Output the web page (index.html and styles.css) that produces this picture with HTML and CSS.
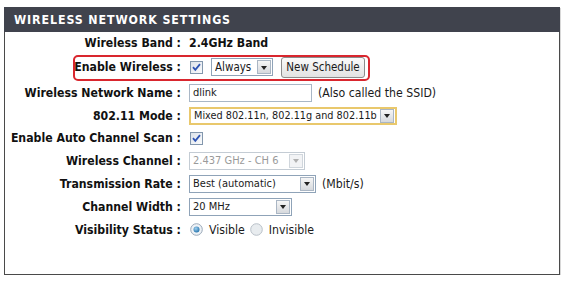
FILE: index.html
```html
<!DOCTYPE html>
<html>
<head>
<meta charset="utf-8">
<link rel="stylesheet" href="styles.css">
</head>
<body>
<div class="panel">
  <div class="head">WIRELESS NETWORK SETTINGS</div>
  <div class="form">
    <div class="row h21"><span class="lbl">Wireless Band :</span><span class="val bold">2.4GHz Band</span></div>
    <div class="row h28 hl">
      <span class="mark"></span>
      <span class="lbl">Enable Wireless :</span>
      <span class="val">
        <span class="chk"><svg viewBox="0 0 13 13" width="13" height="13"><path d="M3 6.2 L5.3 8.8 L10 3.2" fill="none" stroke="#2e54b4" stroke-width="1.8"/></svg></span>
        <span class="sel w-always"><span class="txt">Always</span><span class="arr"></span></span>
        <span class="btn">New Schedule</span>
      </span>
    </div>
    <div class="row h23"><span class="lbl">Wireless Network Name :</span><span class="val"><span class="inp">dlink</span><span class="note">(Also called the SSID)</span></span></div>
    <div class="row h23"><span class="lbl">802.11 Mode :</span><span class="val"><span class="sel w-mode focus"><span class="txt">Mixed 802.11n, 802.11g and 802.11b</span><span class="arr"></span></span></span></div>
    <div class="row h22"><span class="lbl">Enable Auto Channel Scan :</span><span class="val"><span class="chk"><svg viewBox="0 0 13 13" width="13" height="13"><path d="M3 6.2 L5.3 8.8 L10 3.2" fill="none" stroke="#2e54b4" stroke-width="1.8"/></svg></span></span></div>
    <div class="row h23"><span class="lbl">Wireless Channel :</span><span class="val"><span class="sel w-chan dis"><span class="txt">2.437 GHz - CH 6</span><span class="arr"></span></span></span></div>
    <div class="row h23"><span class="lbl">Transmission Rate :</span><span class="val"><span class="sel w-rate"><span class="txt">Best (automatic)</span><span class="arr"></span></span><span class="note">(Mbit/s)</span></span></div>
    <div class="row h23"><span class="lbl">Channel Width :</span><span class="val"><span class="sel w-width"><span class="txt">20 MHz</span><span class="arr"></span></span></span></div>
    <div class="row h23"><span class="lbl">Visibility Status :</span><span class="val">
      <span class="radio"><svg viewBox="0 0 13 13" width="13" height="13"><defs><radialGradient id="rg" cx="0.4" cy="0.35" r="0.7"><stop offset="0" stop-color="#9fd0f0"/><stop offset="1" stop-color="#1f6fa8"/></radialGradient></defs><circle cx="6.5" cy="6.5" r="5.8" fill="#eef2f6" stroke="#9aa8b8"/><circle cx="6.5" cy="6.5" r="3" fill="url(#rg)"/></svg></span>
      <span class="rtxt">Visible</span>
      <span class="radio"><svg viewBox="0 0 13 13" width="13" height="13"><circle cx="6.5" cy="6.5" r="5.8" fill="#e8ecef" stroke="#b8c0c8"/></svg></span>
      <span class="rtxt">Invisible</span>
    </span></div>
  </div>
</div>
</body>
</html>
```
FILE: styles.css
```css
html, body {
  margin: 0;
  padding: 0;
  background: #fff;
}
body {
  font-family: "DejaVu Sans", Verdana, sans-serif;
  font-stretch: condensed;
  color: #1a1a1a;
}
.panel {
  margin: 7px 0 0 4px;
  width: 556px;
  height: 268px;
  box-sizing: border-box;
  border: 1px solid #4a4a4a;
  border-top: none;
  box-shadow: 1px 1px 0 #d8d8d8;
  display: flex;
  flex-direction: column;
}
.head {
  height: 25px;
  background: #40434d;
  color: #fff;
  font-weight: bold;
  font-size: 12.3px;
  letter-spacing: 0.9px;
  padding-left: 10px;
  display: flex;
  align-items: center;
  margin: 0 -1px;
}
.form {
  display: flex;
  flex-direction: column;
}
.row {
  display: grid;
  grid-template-columns: 176px 1fr;
  column-gap: 8px;
  align-items: center;
  position: relative;
}
.h21 { height: 21px; }
.h22 { height: 22px; }
.h23 { height: 23px; }
.h28 { height: 28px; }
.lbl {
  text-align: right;
  font-weight: bold;
  font-size: 12.2px;
  white-space: nowrap;
  color: #111;
}
.val {
  display: flex;
  align-items: center;
  font-size: 11.5px;
  white-space: nowrap;
}
.bold { font-weight: bold; font-size: 12.2px; color: #111; }
.mark {
  position: absolute;
  left: 68px;
  top: 2px;
  width: 297px;
  height: 26px;
  box-sizing: border-box;
  border: 2.5px solid #d9262e;
  border-radius: 5px;
}
.chk {
  width: 13px;
  height: 13px;
  box-sizing: border-box;
  border: 1px solid #8397ad;
  background: linear-gradient(135deg, #dde3ea, #fafbfc);
  display: inline-flex;
  margin-left: 1px;
}
.chk svg { margin: -1px; }
.sel {
  display: inline-flex;
  align-items: center;
  height: 18px;
  box-sizing: border-box;
  border: 1px solid #8fa3b8;
  background: #fff;
  padding-left: 3px;
  font-size: 11px;
}
.sel .txt { flex: 1; overflow: hidden; }
.sel .arr {
  flex: none;
  width: 14px;
  height: 14px;
  box-sizing: border-box;
  margin-right: 1px;
  border: 1px solid #aab6c4;
  background: linear-gradient(#f6f6f6, #d6d9dd);
  display: flex;
  align-items: center;
  justify-content: center;
}
.sel .arr::after {
  content: "";
  border-left: 3.5px solid transparent;
  border-right: 3.5px solid transparent;
  border-top: 4px solid #222;
  margin-top: 1px;
}
.w-always { width: 62px; margin-left: 8px; font-size: 11.5px; }
.w-mode { width: 208px; font-size: 10.8px; }
.w-chan { width: 116px; }
.w-rate { width: 127px; }
.w-width { width: 103px; }
.focus {
  border: 2px solid #e9c86c;
  padding-left: 3px;
}
.dis { color: #9a9a9a; border-color: #c4ccd4; }
.dis .arr { border-color: #d0d6dc; background: #f2f3f5; }
.dis .arr::after { border-top-color: #b0b0b0; }
.btn {
  margin-left: 8px;
  width: 84px;
  height: 21px;
  box-sizing: border-box;
  border: 1px solid #8c8c8c;
  border-radius: 3px;
  background: linear-gradient(#fbfbfb, #e2e2e2);
  display: inline-flex;
  align-items: center;
  justify-content: center;
  font-size: 11.5px;
}
.inp {
  width: 123px;
  height: 18px;
  box-sizing: border-box;
  border: 1px solid #a9b7c6;
  padding-left: 3px;
  display: inline-flex;
  align-items: center;
  font-size: 11px;
}
.note {
  margin-left: 6px;
  font-size: 12.2px;
}
.radio { display: inline-flex; margin-left: 1px; }
.rtxt { margin: 0 4px 0 6px; font-size: 12.2px; }
```
